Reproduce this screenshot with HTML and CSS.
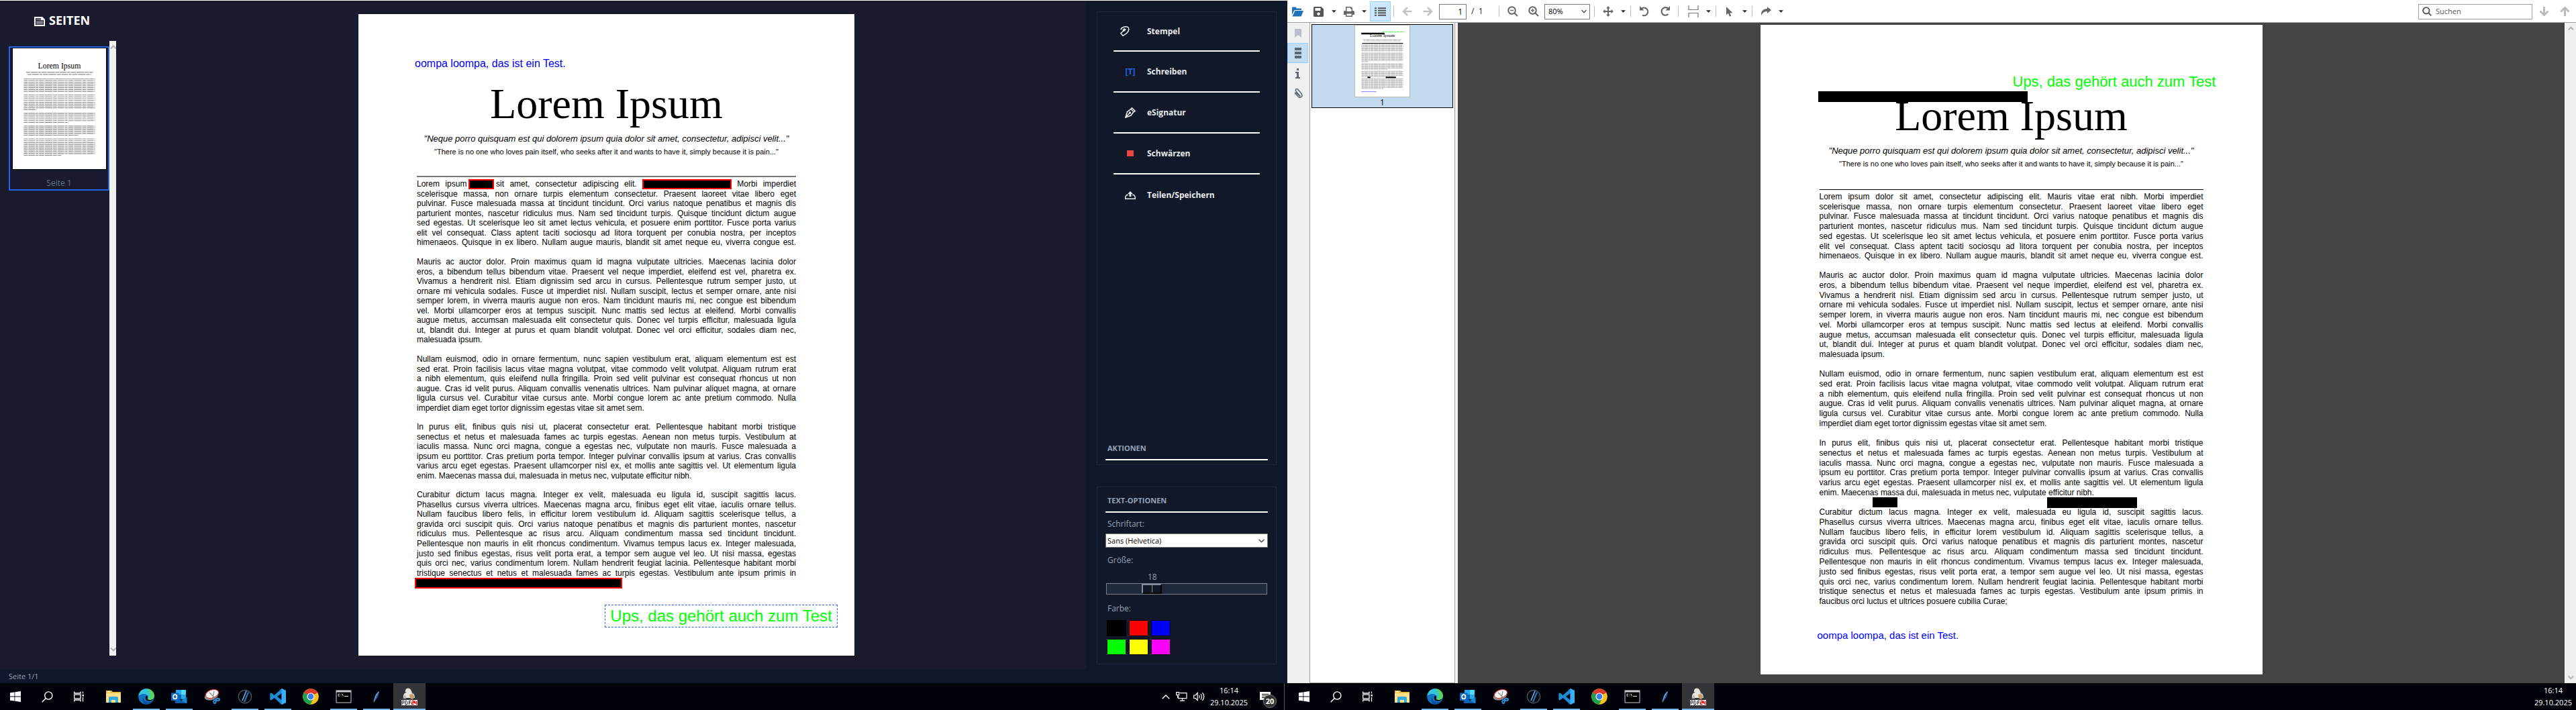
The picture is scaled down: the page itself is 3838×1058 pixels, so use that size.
FILE: index.html
```html
<!DOCTYPE html>
<html lang="de">
<head>
<meta charset="utf-8">
<title>PDF Editor</title>
<link rel="stylesheet" href="styles.css">
</head>
<body>
<svg class="defs" aria-hidden="true">
  <symbol id="i-start" viewBox="0 0 16 16"><path fill="#fff" d="M0 2.3 6.5 1.4V7.6H0zM7.3 1.3 16 0V7.6H7.3zM0 8.4H6.5V14.6L0 13.7zM7.3 8.4H16V16L7.3 14.7z"/></symbol>
  <symbol id="i-search" viewBox="0 0 17 17"><g fill="none" stroke="#fff" stroke-width="1.4"><circle cx="10.3" cy="6.5" r="5.6"/><path d="M6.3 10.6.7 16.3"/></g></symbol>
  <symbol id="i-task" viewBox="0 0 16 16"><g fill="none" stroke="#fff" stroke-width="1.3"><path d="M.7.5V3H10V.5M.7 15.5V13H10v2.5M.7 5.2H10v5.6H.7zM13.5.5v3M13.5 9v6.5"/></g><path fill="#fff" d="M12.5 5h2.4v2.6h-2.4z"/></symbol>
  <symbol id="i-files" viewBox="0 0 24 20"><path fill="#f0b93a" d="M1 1h8l2 2h12v16H1z"/><path fill="#ffe08c" d="M1 5h22v14H1z"/><path fill="#36a8e0" d="M5 19v-7q0-2 2-2h10q2 0 2 2v7h-4v-4H9v4z"/><path fill="#fff2c0" d="M3 2h4v2H3z"/></symbol>
  <symbol id="i-edge" viewBox="0 0 24 24"><circle cx="12" cy="12" r="11.8" fill="#1272c4"/><path fill="#35c4d8" d="M.3 11.5C1 4.500 6 .2 12 .2c7 0 11.800 5 11.800 10.500 0 4-3 6.300-6.500 6.300-2.800 0-4-1.200-3.500-2.400 1.400-3-1-6.600-5-6.600C5 8 1.500 9.500.3 11.500z"/><path fill="#5bd65c" d="M14 .4c6 1 9.800 5.500 9.800 10.300 0 4-3 6.300-6.500 6.300-2 0-3.300-.7-3.500-1.600C19 15 19 6 14 .4z"/><path fill="#0c4d94" d="M7.500 13c0 5.500 5 8.700 10 7.500 2-.5 3.500-1.500 4.300-2.200C20 21.500 16.500 23.800 12 23.800c-4-.8-7-5.500-4.500-10.800z"/><path fill="#00040a" d="M13.600 10.500c1.200 1.800.2 3.200.2 4.300 0 1.500 1.700 2.600 4 2.500l4.500-1.200-1.200 1.500c-2.500 1.500-7 1.800-9.300-.7-1.700-2-1.400-5.600 1.800-6.400z"/></symbol>
  <symbol id="i-outlook" viewBox="0 0 24 22"><path fill="#28a8ea" d="M7 1h15v14H7z"/><path fill="#50d9ff" d="M15 1h7v7h-7z"/><path fill="#0364b8" d="M7 8h8v7H7z"/><path fill="#1b87d6" d="M6 12l9 5 8.500-5.500V21H6z"/><path fill="#0a5fae" d="M6 12l17 9H6z"/><path fill="#0f6cbd" d="M0 5.500h11.500v11.500H0z"/><ellipse cx="5.800" cy="11.200" rx="2.700" ry="3.100" fill="none" stroke="#fff" stroke-width="1.700"/></symbol>
  <symbol id="i-snip" viewBox="0 0 24 22"><ellipse cx="11" cy="10" rx="10.500" ry="6" fill="#8f8f90" transform="rotate(-18 11 10)"/><ellipse cx="12" cy="7" rx="10" ry="6" fill="#f4f4f4" stroke="#d33" stroke-width="1.200" transform="rotate(-18 12 7)"/><path d="M8 5l8 8M15 3l-2 10" stroke="#888" stroke-width="1.200"/><g fill="none" stroke="#2a8fd4" stroke-width="2"><ellipse cx="16" cy="18.500" rx="1.700" ry="2.600"/><ellipse cx="20.500" cy="15.500" rx="2.600" ry="1.800"/></g></symbol>
  <symbol id="i-slash" viewBox="0 0 22 22"><circle cx="11" cy="11" r="9.700" fill="#05090f" stroke="#4f5d6a" stroke-width="1.200"/><path d="M13 2.500 7 17" stroke="#5fa4d8" stroke-width="1.800"/><path d="M16 4.500 10 19" stroke="#2d6ea8" stroke-width="2.200"/></symbol>
  <symbol id="i-code" viewBox="0 0 24 24"><path fill="#1f8ad2" d="M17.500 0 24 3v18l-6.500 3L6.700 14 2.200 17.500.3 16.500v-9l1.900-1L6.700 10zM17.800 7 11 12l6.800 5z" fill-rule="evenodd"/><path fill="#3cb0f5" d="M17.500 0 24 3v18l-6.500 3z"/></symbol>
  <symbol id="i-chrome" viewBox="0 0 24 24"><circle cx="12" cy="12" r="11.800" fill="#fbc116"/><path fill="#dc3a2e" d="M12 12 1.800 6A11.800 11.800 0 0 1 22.200 6z"/><path fill="#1fa04c" d="M12 12 1.800 6a11.800 11.800 0 0 0 9.400 17.800L17 14z"/><circle cx="12" cy="12" r="5.600" fill="#fff"/><circle cx="12" cy="12" r="4.400" fill="#3b7de9"/></symbol>
  <symbol id="i-cmd" viewBox="0 0 24 20"><path fill="#c9ccd0" d="M.5.5h23v19H.5z"/><path fill="#000" d="M1.500 3.500h21v15h-21z"/><path d="M6 6.200H4v3h2M8 6v.8M8 8.500v.8M10 6l1.500 3.500M13 9.500h6" stroke="#ddd" fill="none"/></symbol>
  <symbol id="i-feather" viewBox="0 0 12 20"><path fill="#2e5a96" d="M10.500 1C5 3.500 2 9 1.500 18.500 6 15 10 9 10.500 1z"/><path d="M9.500 2C6 6 3.500 12 1.500 19" stroke="#a9c6e8" fill="none"/></symbol>
  <symbol id="i-sheep" viewBox="0 0 24 26"><path fill="#e9e6df" d="M8 1q4-1.500 6 2l2 4q4 2 4 8H3q-1-5 3-8-1-4 2-6z"/><path fill="#555" d="M5 8l1-2 2 1zM14 7l4 1-1 1z"/><path fill="#c69c6b" d="M12 10q5-2 7 2 0 4-3 5-4-1-4-7z"/><path fill="#bbb6ad" d="M5 10q3 3 2 6H3z"/><path fill="#fff" d="M0 18h24v8H0z"/><path d="M1 25v-5.500h3v3H1M6 25v-5.500h2l1 1v3.500l-1 1zM11.500 25v-5.500h2.500M11.500 22H14" stroke="#222" fill="none"/><path d="M15.500 19.500h3V22h-3v2.500h3M20 19.500V22.500h3M22.500 19.500V25.500" stroke="#e01b1b" stroke-width="1.500" fill="none"/></symbol>
  <symbol id="i-caret" viewBox="0 0 8 4"><path fill="#222" d="M0 0h8L4 4z"/></symbol>
  <symbol id="i-lines" viewBox="0 0 612 792" preserveAspectRatio="none">
    <g fill="none" stroke="#8c8c8c" stroke-width="5" stroke-dasharray="26 4 44 4 18 4 34 4 50 4">
      <path d="M72 210H540M72 222H540M72 234H540M72 246H540M72 258H540M72 270H540M72 282H540"/>
      <path d="M72 306H540M72 318H540M72 330H540M72 342H540M72 354H540M72 366H540M72 378H540M72 390H540M72 402H155"/>
      <path d="M72 426H540M72 438H540M72 450H540M72 462H540M72 474H540M72 486H368"/>
      <path d="M72 510H540M72 522H540M72 534H540M72 546H540M72 558H540M72 570H430"/>
      <path d="M72 594H540M72 606H540M72 618H540M72 630H540M72 642H540M72 654H540M72 666H540M72 678H540M72 690H540M72 702H318"/>
      <path d="M88 157H524M97 171H515"/>
    </g>
  </symbol>
</svg>

<main class="desktop">
  <section class="editor">
    <div class="workspace">
      <aside class="pages">
        <h2 class="pages-title"><svg width="16" height="14" viewBox="0 0 16 14"><path fill="#fff" d="M0 0h12l4 4v10H0z"/><path fill="#1a1a2e" d="M2 2h8v3h4v7H2z"/><path d="M3 3.500h7M3 6.500h10M3 8.500h10M3 10.500h10" stroke="#c8c8d4"/></svg>SEITEN</h2>
        <div class="pages-body">
          <button class="thumb">
            <svg class="thumb-page" viewBox="0 0 612 792" preserveAspectRatio="none"><use href="#i-lines"/><path d="M72 200H540" stroke="#999" stroke-width="4"/><text x="306" y="130" font-family="Liberation Serif, serif" font-size="52" text-anchor="middle">Lorem Ipsum</text></svg>
            <span class="thumb-label">Seite 1</span>
          </button>
          <div class="side-scroll"><svg width="10" height="6" viewBox="0 0 10 6"><path d="M2 5.500 6 1.500 10 5.500" fill="none" stroke="#b4b4b4" stroke-width="2"/></svg><svg width="10" height="6" viewBox="0 0 10 6"><path d="M2 .5 6 4.500 10 .5" fill="none" stroke="#b4b4b4" stroke-width="2"/></svg></div>
        </div>
      </aside>

      <div class="canvas">
        <article class="sheet sheet-left">
          <span class="note note-blue">oompa loompa, das ist ein Test.</span>
          <h1>Lorem Ipsum</h1>
          <p class="quote">"Neque porro quisquam est qui dolorem ipsum quia dolor sit amet, consectetur, adipisci velit..."</p>
          <p class="subquote">"There is no one who loves pain itself, who seeks after it and wants to have it, simply because it is pain..."</p>
          <hr>
          <p class="para seven"><span>Lorem ipsum <mark class="redact word"></mark> sit amet, consectetur adipiscing elit. <mark class="redact phrase"></mark> Morbi imperdiet</span><span>scelerisque massa, non ornare turpis elementum consectetur. Praesent laoreet vitae libero eget</span><span>pulvinar. Fusce malesuada massa at tincidunt tincidunt. Orci varius natoque penatibus et magnis dis</span><span>parturient montes, nascetur ridiculus mus. Nam sed tincidunt turpis. Quisque tincidunt dictum augue</span><span>sed egestas. Ut scelerisque leo sit amet lectus vehicula, et posuere enim porttitor. Fusce porta varius</span><span>elit vel consequat. Class aptent taciti sociosqu ad litora torquent per conubia nostra, per inceptos</span><span>himenaeos. Quisque in ex libero. Nullam augue mauris, blandit sit amet neque eu, viverra congue est.</span></p>
          <p class="para nine"><span>Mauris ac auctor dolor. Proin maximus quam id magna vulputate ultricies. Maecenas lacinia dolor</span><span>eros, a bibendum tellus bibendum vitae. Praesent vel neque imperdiet, eleifend est vel, pharetra ex.</span><span>Vivamus a hendrerit nisl. Etiam dignissim sed arcu in cursus. Pellentesque rutrum semper justo, ut</span><span>ornare mi vehicula sodales. Fusce ut imperdiet nisl. Nullam suscipit, lectus et semper ornare, ante nisi</span><span>semper lorem, in viverra mauris augue non eros. Nam tincidunt mauris mi, nec congue est bibendum</span><span>vel. Morbi ullamcorper eros at tempus suscipit. Nunc mattis sed lectus at eleifend. Morbi convallis</span><span>augue metus, accumsan malesuada elit consectetur quis. Donec vel turpis efficitur, malesuada ligula</span><span>ut, blandit dui. Integer at purus et quam blandit volutpat. Donec vel orci efficitur, sodales diam nec,</span><span class="end">malesuada ipsum.</span></p>
          <p class="para six"><span>Nullam euismod, odio in ornare fermentum, nunc sapien vestibulum erat, aliquam elementum est est</span><span>sed erat. Proin facilisis lacus vitae magna volutpat, vitae commodo velit volutpat. Aliquam rutrum erat</span><span>a nibh elementum, quis eleifend nulla fringilla. Proin sed velit pulvinar est consequat rhoncus ut non</span><span>augue. Cras id velit purus. Aliquam convallis venenatis ultrices. Nam pulvinar aliquet magna, at ornare</span><span>ligula cursus vel. Curabitur vitae cursus ante. Morbi congue lorem ac ante pretium commodo. Nulla</span><span class="end">imperdiet diam eget tortor dignissim egestas vitae sit amet sem.</span></p>
          <p class="para six"><span>In purus elit, finibus quis nisi ut, placerat consectetur erat. Pellentesque habitant morbi tristique</span><span>senectus et netus et malesuada fames ac turpis egestas. Aenean non metus turpis. Vestibulum at</span><span>iaculis massa. Nunc orci magna, congue a egestas nec, vulputate non mauris. Fusce malesuada a</span><span>ipsum eu porttitor. Cras pretium porta tempor. Integer pulvinar convallis ipsum at varius. Cras convallis</span><span>varius arcu eget egestas. Praesent ullamcorper nisl ex, et mollis ante sagittis vel. Ut elementum ligula</span><span class="end">enim. Maecenas massa dui, malesuada in metus nec, vulputate efficitur nibh.</span></p>
          <p class="para ten"><span>Curabitur dictum lacus magna. Integer ex velit, malesuada eu ligula id, suscipit sagittis lacus.</span><span>Phasellus cursus viverra ultrices. Maecenas magna arcu, finibus eget elit vitae, iaculis ornare tellus.</span><span>Nullam faucibus libero felis, in efficitur lorem vestibulum id. Aliquam sagittis scelerisque tellus, a</span><span>gravida orci suscipit quis. Orci varius natoque penatibus et magnis dis parturient montes, nascetur</span><span>ridiculus mus. Pellentesque ac risus arcu. Aliquam condimentum massa sed tincidunt tincidunt.</span><span>Pellentesque non mauris in elit rhoncus condimentum. Vivamus tempus lacus ex. Integer malesuada,</span><span>justo sed finibus egestas, risus velit porta erat, a tempor sem augue vel leo. Ut nisi massa, egestas</span><span>quis orci nec, varius condimentum lorem. Nullam hendrerit feugiat lacinia. Pellentesque habitant morbi</span><span>tristique senectus et netus et malesuada fames ac turpis egestas. Vestibulum ante ipsum primis in</span><span class="end"><mark class="redact line"></mark></span></p>
          <span class="note note-green selected">Ups, das gehört auch zum Test</span>
        </article>
      </div>

      <p class="status">Seite 1/1</p>
    </div>

    <aside class="tools">
      <div class="card card-tools">
        <nav class="tool-list">
          <button class="tool"><svg class="early" width="14" height="15" viewBox="0 0 14 15"><path d="M1 5.500C1 2.500 5 .8 9 .8c3.500 0 4 2.500 3.600 5C12 10 7 12.500 4 14.200L.8 10.500 5 7" fill="none" stroke="#e8eaee" stroke-width="1.600"/><path d="M3 6l3-3 3 2-3 3z" fill="#e8eaee"/></svg>Stempel</button>
          <button class="tool"><span class="glyph-t">[T]</span>Schreiben</button>
          <button class="tool"><svg width="16" height="16" viewBox="0 0 16 16"><path d="M1 15 3.500 6.500 9 2.500l4 4-4 5.500z" fill="none" stroke="#e8eaee" stroke-width="1.600"/><path d="M9 2 10.500.8l4.700 4.700L13.500 7M1 15l6-6.500" fill="none" stroke="#e8eaee" stroke-width="1.600"/><circle cx="7.500" cy="8" r="1.700" fill="#e8eaee"/></svg>eSignatur</button>
          <button class="tool"><svg width="16" height="10" viewBox="0 0 16 10"><path fill="#ef4444" d="M3 0h10v9H3z"/></svg>Schwärzen</button>
          <button class="tool"><svg width="16" height="12" viewBox="0 0 16 12"><path d="M5 5.500H2.500l-1.700 3v2.700h14.400V8.500l-1.700-3H11" fill="none" stroke="#e8eaee" stroke-width="1.500"/><path fill="#e8eaee" d="M8 0l4 4H9.500v4h-3V4H4z"/></svg>Teilen/Speichern</button>
        </nav>
        <h3>AKTIONEN</h3>
      </div>
      <form class="card card-text">
        <h3>TEXT-OPTIONEN</h3>
        <label for="font">Schriftart:</label>
        <div class="select-wrap"><select id="font"><option>Sans (Helvetica)</option></select><svg width="9" height="6" viewBox="0 0 9 6"><path d="M.5.800 4.500 4.800 8.500.800" fill="none" stroke="#444" stroke-width="1.300"/></svg></div>
        <label for="size">Größe:</label>
        <div class="range"><output for="size">18</output><input id="size" type="range" min="8" max="48" value="18"></div>
        <span class="caption">Farbe:</span>
        <div class="swatches">
          <button type="button" class="sw black" aria-label="Schwarz"></button><button type="button" class="sw red" aria-label="Rot"></button><button type="button" class="sw blue" aria-label="Blau"></button><button type="button" class="sw green" aria-label="Grün"></button><button type="button" class="sw yellow" aria-label="Gelb"></button><button type="button" class="sw magenta" aria-label="Magenta"></button>
        </div>
      </form>
    </aside>
  </section>

  <section class="viewer">
    <div class="toolbar">
      <button class="tb" aria-label="Öffnen"><svg width="17" height="15" viewBox="0 0 17 15"><path fill="#2173b8" d="M0 1.500Q0 .5 1 .5h4.500l1.500 2h6q1 0 1 1V5H4.500Q3.500 5 3 6L0 12z"/><path fill="#2173b8" d="M4.500 6H17l-3 7.500q-.4 1-1.500 1H.5z"/></svg></button>
      <button class="tb" aria-label="Speichern"><svg width="15" height="15" viewBox="0 0 15 15"><path fill="#555" fill-rule="evenodd" d="M1.500 0h10L15 3.500v10q0 1.500-1.500 1.500h-12Q0 15 0 13.500v-12Q0 0 1.500 0zM2.500 2v4h8V2zM7.500 8.500a2.200 2.200 0 1 0 .01 0z"/></svg></button>
      <button class="dd" aria-label="Speicheroptionen"><svg width="7" height="4"><use href="#i-caret"/></svg></button>
      <button class="tb" aria-label="Drucken"><svg width="16" height="15" viewBox="0 0 16 15"><path fill="#666" fill-rule="evenodd" d="M3 0h8l2 2v4h1.500Q16 6 16 7.500V12h-3v3H3v-3H0V7.500Q0 6 1.500 6H3zM4.500 1.500V7h7V3H10V1.500zM4.500 10.500v3h7v-3z"/></svg></button>
      <button class="dd" aria-label="Druckoptionen"><svg width="7" height="4"><use href="#i-caret"/></svg></button>
      <button class="tb active" aria-label="Seitenleiste"><svg width="17" height="13" viewBox="0 0 17 13"><path d="M5 1.200h12M5 4.700h12M5 8.200h12M5 11.700h12M0 1.200h3M0 4.700h3M0 8.200h3M0 11.700h3" stroke="#555" stroke-width="2"/></svg></button>
      <i class="sep"></i>
      <button class="tb" aria-label="Zurück"><svg width="15" height="14" viewBox="0 0 15 14"><path d="M14.500 7H3M8 1 2 7l6 6" fill="none" stroke="#c3c3c3" stroke-width="2.600"/></svg></button>
      <button class="tb" aria-label="Vor"><svg width="15" height="14" viewBox="0 0 15 14"><path d="M.5 7H12M7 1l6 6-6 6" fill="none" stroke="#c3c3c3" stroke-width="2.600"/></svg></button>
      <input class="page-no" type="text" value="1" aria-label="Seite">
      <span class="page-count">/&nbsp; 1</span>
      <i class="sep"></i>
      <button class="tb" aria-label="Verkleinern"><svg width="16" height="16" viewBox="0 0 16 16"><g fill="none" stroke="#666" stroke-width="2"><circle cx="6.500" cy="6.500" r="5.300"/><path d="M10.500 10.500 15 15"/><path d="M4 6.500h5" stroke-width="1.500"/></g></svg></button>
      <button class="tb" aria-label="Vergrößern"><svg width="16" height="16" viewBox="0 0 16 16"><g fill="none" stroke="#666" stroke-width="2"><circle cx="6.500" cy="6.500" r="5.300"/><path d="M10.500 10.500 15 15"/><path d="M4 6.500h5M6.500 4v5" stroke-width="1.500"/></g></svg></button>
      <div class="zoom-wrap"><select aria-label="Zoom"><option>80%</option></select><svg width="8" height="6" viewBox="0 0 8 6"><path d="M.5.800 4 4.800 7.500.800" fill="none" stroke="#333" stroke-width="1.200"/></svg></div>
      <i class="sep"></i>
      <button class="tb" aria-label="Verschieben"><svg width="16" height="16" viewBox="0 0 16 16"><path d="M8 2v12M2 8h12" stroke="#666" stroke-width="2"/><path fill="#666" d="M8 0l3 3.500H5zM8 16l3-3.500H5zM0 8l3.500-3v6zM16 8l-3.500-3v6z"/></svg></button>
      <button class="dd" aria-label="Anpassen"><svg width="7" height="4"><use href="#i-caret"/></svg></button>
      <i class="sep"></i>
      <button class="tb" aria-label="Links drehen"><svg width="16" height="16" viewBox="0 0 16 16"><path d="M3 4.500A5.800 5.800 0 1 1 5 13.700" fill="none" stroke="#666" stroke-width="2.200"/><path fill="#666" d="M1 0v6.500h6.500z"/></svg></button>
      <button class="tb" aria-label="Rechts drehen"><svg width="16" height="16" viewBox="0 0 16 16"><path d="M13 4.500A5.800 5.800 0 1 0 12.500 12" fill="none" stroke="#666" stroke-width="2.200"/><path fill="#666" d="M15 0v6.500H8.500z"/></svg></button>
      <i class="sep"></i>
      <button class="tb wide" aria-label="Seitenlayout"><svg width="16" height="18" viewBox="0 0 16 18"><path d="M1 0v6.500h14V0M1 18v-6.500h14V18" fill="none" stroke="#777" stroke-width="1.200"/></svg></button>
      <button class="dd" aria-label="Layoutoptionen"><svg width="7" height="4"><use href="#i-caret"/></svg></button>
      <i class="sep"></i>
      <button class="tb" aria-label="Auswahl"><svg width="11" height="15" viewBox="0 0 11 15"><path fill="#666" d="M1 0v12.500l3-2.700 2 5 2.200-1-2-4.600H10.500z"/></svg></button>
      <button class="dd" aria-label="Auswahloptionen"><svg width="7" height="4"><use href="#i-caret"/></svg></button>
      <i class="sep"></i>
      <button class="tb" aria-label="Senden"><svg width="16" height="14" viewBox="0 0 16 14"><path fill="#666" d="M10 0l6 5-6 5V7Q3.500 6.500 1 13.500 0 3.500 10 3z"/></svg></button>
      <button class="dd" aria-label="Sendeoptionen"><svg width="7" height="4"><use href="#i-caret"/></svg></button>
      <label class="search"><svg width="14" height="14" viewBox="0 0 14 14"><g fill="none" stroke="#555" stroke-width="1.900"><circle cx="5.800" cy="5.800" r="4.700"/><path d="M9.200 9.200 13.300 13.300"/></g></svg><input type="search" placeholder="Suchen" aria-label="Suchen"></label>
      <button class="tb" aria-label="Weiter suchen"><svg width="15" height="14" viewBox="0 0 15 14"><path d="M7.500 0v11M1.500 6.500l6 6 6-6" fill="none" stroke="#bbb" stroke-width="3"/></svg></button>
      <button class="tb" aria-label="Zurück suchen"><svg width="15" height="14" viewBox="0 0 15 14"><path d="M7.500 14V3M1.500 7.500l6-6 6 6" fill="none" stroke="#bbb" stroke-width="3"/></svg></button>
    </div>

    <div class="viewer-body">
      <nav class="rail">
        <button aria-label="Lesezeichen"><svg width="10" height="13" viewBox="0 0 10 13"><path fill="#b9bfc9" d="M0 0h10v13L5 9l-5 4z"/></svg></button>
        <button class="on" aria-label="Miniaturen"><svg width="10" height="16" viewBox="0 0 10 16"><path fill="#5b6878" d="M0 0h10v4H0zM0 6h10v4H0zM0 12h10v4H0z"/></svg></button>
        <button aria-label="Informationen"><svg width="7" height="15" viewBox="0 0 7 15"><path fill="#5b6878" d="M2 0h3v3H2zM0 5h5v8h2v2H0v-2h2V7H0z"/></svg></button>
        <button aria-label="Anhänge"><svg width="14" height="16" viewBox="0 0 14 16"><path d="M3.500 6.500 9 12q1.500 1 .5-.5L4 5Q2.500 3 4 1.800q1.500-1 3 .7l5 6q2 3 0 5-2.500 2-5-.5l-5-6" fill="none" stroke="#5b6878" stroke-width="1.500"/></svg></button>
      </nav>
      <div class="thumb-list">
        <button class="mini">
          <svg class="mini-page" viewBox="0 0 612 792" preserveAspectRatio="none"><use href="#i-lines"/><path d="M79 198H540" stroke="#000" stroke-width="8"/><path d="M140 578h32M344 578h116" stroke="#000" stroke-width="15"/><path d="M70 90H330" stroke="#000" stroke-width="18"/><path d="M305 72H555" stroke="#5cf05c" stroke-width="10" stroke-dasharray="30 6 24 6"/><path d="M70 737H240" stroke="#5c5cf0" stroke-width="6"/><text x="306" y="130" font-family="Liberation Serif, serif" font-size="52" text-anchor="middle">Lorem Ipsum</text></svg>
          <span>1</span>
        </button>
      </div>
      <div class="reader">
        <article class="sheet sheet-right">
          <h1>Lorem Ipsum</h1>
          <p class="quote">"Neque porro quisquam est qui dolorem ipsum quia dolor sit amet, consectetur, adipisci velit..."</p>
          <p class="subquote">"There is no one who loves pain itself, who seeks after it and wants to have it, simply because it is pain..."</p>
          <hr>
          <p class="para seven"><span>Lorem ipsum dolor sit amet, consectetur adipiscing elit. Mauris vitae erat nibh. Morbi imperdiet</span><span>scelerisque massa, non ornare turpis elementum consectetur. Praesent laoreet vitae libero eget</span><span>pulvinar. Fusce malesuada massa at tincidunt tincidunt. Orci varius natoque penatibus et magnis dis</span><span>parturient montes, nascetur ridiculus mus. Nam sed tincidunt turpis. Quisque tincidunt dictum augue</span><span>sed egestas. Ut scelerisque leo sit amet lectus vehicula, et posuere enim porttitor. Fusce porta varius</span><span>elit vel consequat. Class aptent taciti sociosqu ad litora torquent per conubia nostra, per inceptos</span><span>himenaeos. Quisque in ex libero. Nullam augue mauris, blandit sit amet neque eu, viverra congue est.</span></p>
          <p class="para nine"><span>Mauris ac auctor dolor. Proin maximus quam id magna vulputate ultricies. Maecenas lacinia dolor</span><span>eros, a bibendum tellus bibendum vitae. Praesent vel neque imperdiet, eleifend est vel, pharetra ex.</span><span>Vivamus a hendrerit nisl. Etiam dignissim sed arcu in cursus. Pellentesque rutrum semper justo, ut</span><span>ornare mi vehicula sodales. Fusce ut imperdiet nisl. Nullam suscipit, lectus et semper ornare, ante nisi</span><span>semper lorem, in viverra mauris augue non eros. Nam tincidunt mauris mi, nec congue est bibendum</span><span>vel. Morbi ullamcorper eros at tempus suscipit. Nunc mattis sed lectus at eleifend. Morbi convallis</span><span>augue metus, accumsan malesuada elit consectetur quis. Donec vel turpis efficitur, malesuada ligula</span><span>ut, blandit dui. Integer at purus et quam blandit volutpat. Donec vel orci efficitur, sodales diam nec,</span><span class="end">malesuada ipsum.</span></p>
          <p class="para six"><span>Nullam euismod, odio in ornare fermentum, nunc sapien vestibulum erat, aliquam elementum est est</span><span>sed erat. Proin facilisis lacus vitae magna volutpat, vitae commodo velit volutpat. Aliquam rutrum erat</span><span>a nibh elementum, quis eleifend nulla fringilla. Proin sed velit pulvinar est consequat rhoncus ut non</span><span>augue. Cras id velit purus. Aliquam convallis venenatis ultrices. Nam pulvinar aliquet magna, at ornare</span><span>ligula cursus vel. Curabitur vitae cursus ante. Morbi congue lorem ac ante pretium commodo. Nulla</span><span class="end">imperdiet diam eget tortor dignissim egestas vitae sit amet sem.</span></p>
          <p class="para six"><span>In purus elit, finibus quis nisi ut, placerat consectetur erat. Pellentesque habitant morbi tristique</span><span>senectus et netus et malesuada fames ac turpis egestas. Aenean non metus turpis. Vestibulum at</span><span>iaculis massa. Nunc orci magna, congue a egestas nec, vulputate non mauris. Fusce malesuada a</span><span>ipsum eu porttitor. Cras pretium porta tempor. Integer pulvinar convallis ipsum at varius. Cras convallis</span><span>varius arcu eget egestas. Praesent ullamcorper nisl ex, et mollis ante sagittis vel. Ut elementum ligula</span><span class="end">enim. Maecenas massa dui, malesuada in metus nec, vulputate efficitur nibh.</span></p>
          <p class="para ten"><span>Curabitur dictum lacus magna. Integer ex velit, malesuada eu ligula id, suscipit sagittis lacus.</span><span>Phasellus cursus viverra ultrices. Maecenas magna arcu, finibus eget elit vitae, iaculis ornare tellus.</span><span>Nullam faucibus libero felis, in efficitur lorem vestibulum id. Aliquam sagittis scelerisque tellus, a</span><span>gravida orci suscipit quis. Orci varius natoque penatibus et magnis dis parturient montes, nascetur</span><span>ridiculus mus. Pellentesque ac risus arcu. Aliquam condimentum massa sed tincidunt tincidunt.</span><span>Pellentesque non mauris in elit rhoncus condimentum. Vivamus tempus lacus ex. Integer malesuada,</span><span>justo sed finibus egestas, risus velit porta erat, a tempor sem augue vel leo. Ut nisi massa, egestas</span><span>quis orci nec, varius condimentum lorem. Nullam hendrerit feugiat lacinia. Pellentesque habitant morbi</span><span>tristique senectus et netus et malesuada fames ac turpis egestas. Vestibulum ante ipsum primis in</span><span class="end">faucibus orci luctus et ultrices posuere cubilia Curae;</span></p>
          <i class="bar bar-head"></i><i class="bar bar-word"></i><i class="bar bar-phrase"></i>
          <span class="note note-green">Ups, das gehört auch zum Test</span>
          <span class="note note-blue">oompa loompa, das ist ein Test.</span>
        </article>
      </div>
      <div class="reader-scroll"><svg width="9" height="7" viewBox="0 0 9 7"><path d="M.7 5.500 4.500 1.700 8.300 5.500" fill="none" stroke="#b4b4b4" stroke-width="2"/></svg><svg width="9" height="7" viewBox="0 0 9 7"><path d="M.7 1.500 4.500 5.300 8.300 1.500" fill="none" stroke="#b4b4b4" stroke-width="2"/></svg></div>
    </div>
  </section>
</main>

<footer class="taskbars">
  <div class="taskbar">
    <button class="start" aria-label="Start"><svg width="16" height="16"><use href="#i-start"/></svg></button>
    <button class="sys" aria-label="Suche"><svg width="17" height="17"><use href="#i-search"/></svg></button>
    <button class="sys" aria-label="Taskansicht"><svg width="16" height="16"><use href="#i-task"/></svg></button>
    <div class="apps">
      <button aria-label="Explorer"><svg width="24" height="20"><use href="#i-files"/></svg></button>
      <button class="run" aria-label="Edge"><svg width="24" height="24"><use href="#i-edge"/></svg></button>
      <button class="run" aria-label="Outlook"><svg width="24" height="22"><use href="#i-outlook"/></svg></button>
      <button aria-label="Snipping Tool"><svg width="24" height="22"><use href="#i-snip"/></svg></button>
      <button class="run" aria-label="Client"><svg width="22" height="22"><use href="#i-slash"/></svg></button>
      <button class="run" aria-label="Code"><svg width="24" height="24"><use href="#i-code"/></svg></button>
      <button aria-label="Chrome"><svg width="24" height="24"><use href="#i-chrome"/></svg></button>
      <button class="run" aria-label="Konsole"><svg width="24" height="20"><use href="#i-cmd"/></svg></button>
      <button class="run" aria-label="Tk"><svg width="12" height="18"><use href="#i-feather"/></svg></button>
      <button class="run current" aria-label="PDF24"><svg width="24" height="26"><use href="#i-sheep"/></svg></button>
    </div>
    <div class="tray">
      <svg width="12" height="7" viewBox="0 0 12 7"><path d="M.7 6.300 6 1l5.300 5.300" fill="none" stroke="#fff" stroke-width="1.300"/></svg>
      <svg width="17" height="14" viewBox="0 0 17 14"><path d="M6 1.700h10v8H3.500V6M9.500 10v3M6 13.200h7M.7.700h4v4h-4zM2.700 5v4" fill="none" stroke="#fff" stroke-width="1.200"/></svg>
      <svg width="17" height="14" viewBox="0 0 17 14"><path d="M.7 5h2.500l3-3.500v11L3.200 9.500H.7zM8.500 5q1.500 2 0 4.500M11 3q3 4 0 8.500M13.500 1.200q4.500 5.500 0 12" fill="none" stroke="#fff" stroke-width="1.200"/></svg>
    </div>
    <time class="clock">16:14<br>29.10.2025</time>
    <div class="action"><svg width="16" height="15" viewBox="0 0 16 15"><path fill="#fff" d="M0 0h16v12H8l-2 3v-3H0z"/><path d="M3 3.500h10M3 6h10M3 8.500h7" stroke="#000" stroke-width="1.200"/></svg><span class="badge">20</span></div>
  </div>
  <div class="taskbar second">
    <button class="start" aria-label="Start"><svg width="16" height="16"><use href="#i-start"/></svg></button>
    <button class="sys" aria-label="Suche"><svg width="17" height="17"><use href="#i-search"/></svg></button>
    <button class="sys" aria-label="Taskansicht"><svg width="16" height="16"><use href="#i-task"/></svg></button>
    <div class="apps">
      <button aria-label="Explorer"><svg width="24" height="20"><use href="#i-files"/></svg></button>
      <button class="run" aria-label="Edge"><svg width="24" height="24"><use href="#i-edge"/></svg></button>
      <button class="run" aria-label="Outlook"><svg width="24" height="22"><use href="#i-outlook"/></svg></button>
      <button aria-label="Snipping Tool"><svg width="24" height="22"><use href="#i-snip"/></svg></button>
      <button class="run" aria-label="Client"><svg width="22" height="22"><use href="#i-slash"/></svg></button>
      <button class="run" aria-label="Code"><svg width="24" height="24"><use href="#i-code"/></svg></button>
      <button aria-label="Chrome"><svg width="24" height="24"><use href="#i-chrome"/></svg></button>
      <button class="run" aria-label="Konsole"><svg width="24" height="20"><use href="#i-cmd"/></svg></button>
      <button class="run" aria-label="Tk"><svg width="12" height="18"><use href="#i-feather"/></svg></button>
      <button class="run current" aria-label="PDF24"><svg width="24" height="26"><use href="#i-sheep"/></svg></button>
    </div>
    <div class="tray"></div>
    <time class="clock">16:14<br>29.10.2025</time>
  </div>
</footer>
</body>
</html>
```
FILE: styles.css
```css
* { box-sizing: border-box; }
body {
  margin: 0;
  min-height: 100vh;
  display: flex;
  flex-direction: column;
  font: 12px/16px "Open Sans", "Noto Sans", sans-serif;
  background: #00040a;
}
.defs { position: absolute; width: 0; height: 0; }
button { margin: 0; padding: 0; border: 0; background: none; font: inherit; color: inherit; }
h1, h2, h3, p { margin: 0; font-weight: inherit; }
svg { display: block; flex: none; }

.desktop { flex: 1; display: grid; grid-template-columns: 1918fr 1920fr; border-top: 1px solid #fff; }

/* Editor window */
.editor { display: grid; grid-template-columns: 1fr 300px; background: #0f172a; }
.workspace { display: grid; grid-template-columns: 189px 1fr; grid-template-rows: 1fr 21px; background: #1a1a2e; }
.pages { display: flex; flex-direction: column; padding-bottom: 20px; }
.pages-title { display: flex; align-items: center; gap: 6px; height: 60px; padding: 0 0 2px 51px; font: 700 18px/24px "Open Sans", sans-serif; color: #fff; }
.pages-title svg { margin-top: 4px; }
.pages-body { flex: 1; display: flex; }
.thumb { align-self: flex-start; display: flex; flex-direction: column; width: 150px; height: 215px; margin: 8px 0 0 13px; padding: 0 2px; border: 2px solid #2563eb; align-items: center; }
.thumb-page { width: 141px; height: 182px; border: 1px solid #000; background: #fff; }
.thumb-label { margin-top: 12px; color: #64748b; }
.side-scroll { display: flex; flex-direction: column; justify-content: space-between; width: 10px; padding: 6px 0; background: #f0f0f0; }
.status { grid-column: 1 / -1; padding-left: 13px; font-size: 11px; line-height: 21px; color: #94a3b8; background: #0f172a; }

.canvas { display: flex; justify-content: center; align-items: flex-start; padding: 20px 0; }

/* Document sheets */
.sheet { position: relative; background: #fff; color: #000; font: 12px/15px "Liberation Sans", Arial, sans-serif; }
.sheet h1 { font-family: "Liberation Serif", "Times New Roman", serif; font-size: 64px; line-height: 70px; text-align: center; }
.quote, .subquote { text-align: center; white-space: nowrap; }
.quote { margin-top: 8px; font-size: 13px; line-height: 18px; font-style: italic; }
.subquote { margin-top: 2px; font-size: 11px; line-height: 16px; }
.sheet hr { margin: 28px 0 3px; border: 0; background: #777; height: 2px; }
.para { display: grid; grid-auto-rows: 1fr; margin-bottom: 14px; }
.para span { height: 0; white-space: nowrap; text-align: justify; text-align-last: justify; }
.para .end { text-align-last: left; }
.note { position: absolute; white-space: nowrap; }
.note-blue { color: #00f; }
.note-green { color: #0f0; }

.sheet-left { width: 739px; height: 956px; padding: 99px 87px 0; }
.sheet-left .seven { height: 102px; }
.sheet-left .nine { height: 131px; }
.sheet-left .six { height: 87px; }
.sheet-left .ten { height: 146px; }
.sheet-left .note-blue { left: 84px; top: 64px; font-size: 16px; line-height: 20px; }
.selected { left: 367px; top: 880px; width: 347px; border: 1px dashed #2563eb; font-size: 24px; line-height: 32px; text-align: center; }
.redact { display: inline-block; height: 15px; border: 2px solid #f00; background: #000; vertical-align: top; }
.redact.word { width: 38px; margin: 0 -5px 0 -6px; }
.redact.phrase { width: 133px; }
.redact.line { width: 309px; height: 16px; margin-left: -3px; }

.sheet-right { width: 748px; height: 968px; padding: 100px 88px 0; }
.sheet-right h1 { line-height: 71px; }
.sheet-right hr { height: 1px; margin-top: 30px; background: #000; }
.sheet-right .seven { height: 103px; }
.sheet-right .nine { height: 133px; }
.sheet-right .six { height: 89px; }
.sheet-right .ten { height: 148px; }
.sheet-right .note-blue { left: 85px; top: 900px; font-size: 15px; line-height: 20px; }
.sheet-right .note-green { left: 376px; top: 72px; font-size: 22px; line-height: 26px; }
.bar { position: absolute; height: 16px; background: #000; }
.bar-head { left: 86px; top: 99px; width: 312px; }
.bar-word { left: 167px; top: 704px; width: 37px; height: 15px; }
.bar-phrase { left: 427px; top: 704px; width: 134px; }

/* Tool panel */
.tools { display: flex; flex-direction: column; gap: 32px; padding: 16px 16px 28px; color: #94a3b8; }
.card { padding: 0 12px; border: 1px solid #1e293b; background: #111827; }
.card-tools { flex: 1; display: flex; flex-direction: column; justify-content: space-between; padding-bottom: 6px; }
.tool-list { display: flex; flex-direction: column; padding: 0 12px; }
.tool { display: grid; grid-template-columns: 50px 1fr; align-items: center; justify-items: start; height: 61px; border-bottom: 2px solid #fff; font-weight: 700; color: #e8eaee; text-align: left; }
.tool:first-child { height: 59px; }
.tool:last-child { border-bottom: 0; }
.tool svg, .glyph-t { justify-self: center; }
.tool .early { justify-self: start; margin-left: 10px; }
.glyph-t { color: #2563eb; }
.card h3 { padding: 0 3px 6px; border-bottom: 2px solid #fff; font-size: 11px; font-weight: 700; line-height: 20px; }
.card-text { display: flex; flex-direction: column; height: 265px; }
.card-text h3 { padding-top: 10px; margin-bottom: 8px; }
.card-text label, .caption { padding: 0 3px; line-height: 18px; }
.select-wrap, .zoom-wrap { display: grid; align-items: center; }
.select-wrap > *, .zoom-wrap > * { grid-area: 1 / 1; }
.select-wrap svg, .zoom-wrap svg { justify-self: end; margin-right: 5px; pointer-events: none; }
select { appearance: none; width: 100%; border: 1px solid #7a7a7a; border-radius: 0; background: #fff; font: inherit; font-size: 11px; color: #000; }
.select-wrap select { height: 21px; padding: 0 2px; }
.select-wrap { margin: 5px 0 10px; }
.range { display: flex; flex-direction: column; margin: 7px 1px 12px; }
.range output { padding-left: 62px; line-height: 18px; }
.range input { appearance: none; width: 100%; height: 17px; margin: 0; border: 1px solid #777f8c; background: #1e293b; }
.range input::-webkit-slider-thumb { appearance: none; width: 30px; height: 15px; border: 2px solid; border-color: #888f9a #000 #000 #888f9a; background: linear-gradient(90deg, #111827 12px, #000 12px 13px, #999 13px 14px, #111827 14px); }
.swatches { display: grid; grid-template-columns: repeat(3, 29px); gap: 4px; margin: 8px 2px; }
.sw { height: 24px; border: 1px solid #000; }
.black { background: #000; }
.red { background: #f00; }
.blue { background: #00f; }
.green { background: #0f0; }
.yellow { background: #ff0; }
.magenta { background: #f0f; }

/* Viewer window */
.viewer { display: flex; flex-direction: column; background: #fff; color: #222; }
.toolbar { display: flex; align-items: center; height: 33px; padding-right: 1px; border-bottom: 1px solid #a0a0a0; }
.tb, .dd { display: flex; align-items: center; justify-content: center; width: 31px; height: 30px; }
.dd { width: 14px; }
.tb.active { margin-left: 2px; border: 1px solid #99d1ff; background: #cce8ff; }
.tb.wide { margin-left: 2px; }
.sep { width: 1px; height: 16px; margin: 0 4px; background: #bbb; }
.page-no { width: 41px; height: 23px; margin: 0 7px 0 1px; padding: 0 5px; border: 1px solid #7a7a7a; font: inherit; text-align: right; color: #000; }
.page-count { width: 37px; }
.zoom-wrap { width: 68px; margin: 0 2px 0 1px; }
.zoom-wrap select { height: 23px; padding: 0 5px; }
.search { display: flex; align-items: center; gap: 6px; width: 170px; height: 23px; margin-left: auto; margin-right: 2px; padding-left: 5px; border: 1px solid #a0a0a0; }
.search input { flex: 1; min-width: 0; padding: 0; border: 0; outline: 0; background: none; font: inherit; font-size: 11px; }
.search input::placeholder { color: #555; }

.viewer-body { flex: 1; display: grid; grid-template-columns: 33px 217px 4px 1fr 17px; background: #f0f0f0; }
.rail { display: flex; flex-direction: column; }
.rail button { display: flex; align-items: center; justify-content: center; width: 31px; height: 30px; }
.rail .on { border: 1px solid #99d1ff; background: #c2ddf2; }
.thumb-list { padding: 2px; border: 1px solid #a0a0a0; border-top: 0; background: #fff; }
.mini { display: flex; flex-direction: column; align-items: center; width: 100%; height: 125px; border: 1px solid #000; background: #c2d9ee; color: #000; }
.mini-page { width: 83px; height: 108px; border: 1px solid #b8b8b8; background: #fff; }
.reader { grid-column: 4; display: flex; justify-content: center; align-items: flex-start; padding: 3px 0; background: #444; }
.reader-scroll { display: flex; flex-direction: column; justify-content: space-between; align-items: center; padding: 5px 0; border-left: 1px solid #fff; }

/* Taskbars */
.taskbars { display: grid; grid-template-columns: 1920fr 1918fr; height: 40px; color: #fff; background: #00040a; }
.taskbar { display: flex; align-items: stretch; }
.taskbar button { display: flex; align-items: center; justify-content: center; width: 48px; }
.taskbar .start { width: 46px; }
.apps { display: flex; gap: 1px; margin-left: 3px; }
.apps .run { background: linear-gradient(#76b9ed, #76b9ed) bottom / 40px 2px no-repeat; }
.apps .current { background: linear-gradient(#76b9ed, #76b9ed) bottom / 48px 2px no-repeat #333538; }
.tray { display: flex; align-items: center; gap: 9px; margin-left: auto; }
.clock { align-self: center; margin-left: 8px; font-size: 11px; line-height: 18px; text-align: center; white-space: nowrap; }
.action { position: relative; display: flex; align-items: center; margin: 0 6px 0 18px; padding-right: 20px; border-right: 1px solid #555; }
.badge { position: absolute; left: 5px; top: 17px; width: 20px; height: 20px; border: 1px solid #777; border-radius: 50%; background: #333; font-weight: 700; font-size: 11px; line-height: 18px; text-align: center; }
.second { padding-right: 6px; }
```
